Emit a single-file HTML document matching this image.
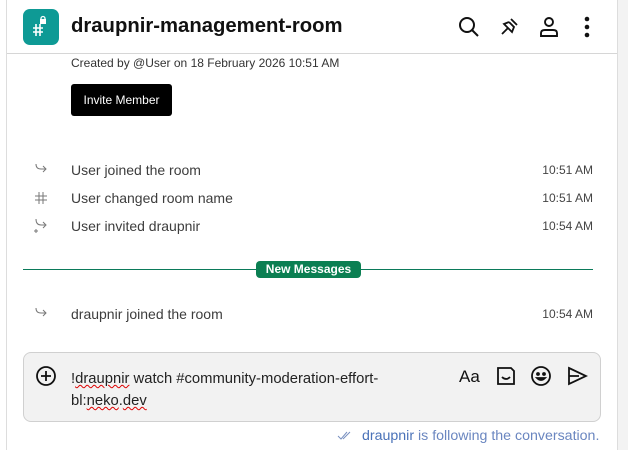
<!DOCTYPE html>
<html><head><style>
body{margin:0;width:628px;height:450px;overflow:hidden;background:#fff;font-family:"Liberation Sans",sans-serif;position:relative;color:#333}
.a{position:absolute}
.lb{left:0;top:0;width:6px;height:450px;border-right:1px solid #ddd;background:#fff}
.rb{left:617px;top:0;width:11px;height:450px;background:#f3f3f3;border-left:1px solid #ddd}
.hdr{left:7px;top:0;width:610px;height:53px;border-bottom:1px solid #d6d6d6;background:#fff}
.ev{font-size:14px;color:#3d3d3d}
.t{font-size:12px;color:#444;right:35px}
svg{position:absolute}
</style></head><body>
<div class="a lb"></div><div class="a rb"></div>
<div class="a hdr"></div>
<div class="a" style="left:23px;top:9px;width:36px;height:36px;border-radius:7px;background:#0e9a95"></div>
<svg style="left:23px;top:9px" width="36" height="36" viewBox="0 0 36 36" fill="none" stroke="#fff" stroke-width="1.6"><path d="M13 15v12M17 15v12M10 19h10M10 23h10"/><rect x="17" y="10" width="6" height="5" fill="#fff" stroke="none"/><path d="M18 10.5v-1a2 2 0 0 1 4 0v1" stroke-width="1.3"/></svg>
<div class="a" style="left:71px;top:15px;font-size:20.3px;font-weight:bold;color:#111">draupnir-management-room</div>
<svg style="left:457px;top:15px" width="24" height="24" viewBox="0 0 24 24" fill="none" stroke="#111" stroke-width="2"><circle cx="10" cy="10" r="7"/><path d="M15 15l6 6"/></svg>
<svg style="left:498px;top:16px" width="22" height="22" viewBox="0 0 22 22" fill="none" stroke="#111" stroke-width="1.8"><path d="M13 3l6 6M11 6l5 5-2 5-8-8 5-2M10 12l-6 6"/></svg>
<svg style="left:538px;top:15px" width="22" height="24" viewBox="0 0 22 24" fill="none" stroke="#111" stroke-width="1.9"><circle cx="11" cy="7" r="4"/><path d="M3 21v-3q0-3 4-3h8q4 0 4 3v3z"/></svg>
<svg style="left:583px;top:15px" width="8" height="24" viewBox="0 0 8 24" fill="#111"><circle cx="4" cy="4" r="2.3"/><circle cx="4" cy="12" r="2.3"/><circle cx="4" cy="20" r="2.3"/></svg>
<div class="a" style="left:71px;top:56px;font-size:12px;color:#333">Created by @User on 18 February 2026 10:51 AM</div>
<div class="a" style="left:71px;top:84px;width:101px;height:32px;background:#000;border-radius:3px;color:#fff;font-size:12px;line-height:32px;text-align:center">Invite Member</div>

<svg style="left:34px;top:163px" width="14" height="12" viewBox="0 0 14 12" fill="none" stroke="#777" stroke-width="1"><path d="M2 1q0 5 5 5h5M9 3l3 3-3 3"/></svg>
<div class="a ev" style="left:71px;top:162px">User joined the room</div><div class="a t" style="top:163px">10:51 AM</div>
<svg style="left:34px;top:191px" width="14" height="14" viewBox="0 0 14 14" fill="none" stroke="#777" stroke-width="1"><path d="M5 1v12M9 1v12M1 5h12M1 9h12"/></svg>
<div class="a ev" style="left:71px;top:190px">User changed room name</div><div class="a t" style="top:191px">10:51 AM</div>
<svg style="left:33px;top:218px" width="15" height="16" viewBox="0 0 15 16" fill="none" stroke="#777" stroke-width="1"><path d="M3 1q0 6 5 6h4M10 4l3 3-3 3M3 11v4M1 13h4"/></svg>
<div class="a ev" style="left:71px;top:218px">User invited draupnir</div><div class="a t" style="top:219px">10:54 AM</div>

<div class="a" style="left:23px;top:269px;width:570px;height:1px;background:#0b7a5a"></div>
<div class="a" style="left:256px;top:261px;width:105px;height:17px;background:#0b7f52;border-radius:4px;color:#fff;font-size:12px;font-weight:bold;line-height:17px;text-align:center">New Messages</div>

<svg style="left:34px;top:307px" width="14" height="12" viewBox="0 0 14 12" fill="none" stroke="#777" stroke-width="1"><path d="M2 1q0 5 5 5h5M9 3l3 3-3 3"/></svg>
<div class="a ev" style="left:71px;top:306px">draupnir joined the room</div><div class="a t" style="top:307px">10:54 AM</div>

<div class="a" style="left:23px;top:352px;width:576px;height:68px;background:#f2f2f2;border:1px solid #d0d0d0;border-radius:8px"></div>
<svg style="left:35px;top:365px" width="22" height="22" viewBox="0 0 22 22" fill="none" stroke="#111" stroke-width="1.8"><circle cx="11" cy="11" r="9"/><path d="M11 6v10M6 11h10"/></svg>
<div class="a" style="left:71px;top:368px;font-size:14.8px;color:#222;line-height:22px">!<span style="text-decoration:underline wavy #d00;text-decoration-thickness:1px">draupnir</span> watch #community-moderation-effort-<br>bl:<span style="text-decoration:underline wavy #d00;text-decoration-thickness:1px">neko</span>.<span style="text-decoration:underline wavy #d00;text-decoration-thickness:1px">dev</span></div>
<div class="a" style="left:459px;top:367px;font-size:17px;color:#111">Aa</div>
<svg style="left:495px;top:365px" width="22" height="22" viewBox="0 0 22 22" fill="none" stroke="#111" stroke-width="1.8"><path d="M3 3h13l3 3v13H3z"/><path d="M7 12q4 4 8 0"/></svg>
<svg style="left:530px;top:365px" width="22" height="22" viewBox="0 0 22 22" fill="none" stroke="#111" stroke-width="1.8"><circle cx="11" cy="11" r="9"/><circle cx="8" cy="9" r="1" fill="#111"/><circle cx="14" cy="9" r="1" fill="#111"/><path d="M7 13q4 4 8 0z" fill="#111"/></svg>
<svg style="left:566px;top:365px" width="22" height="22" viewBox="0 0 22 22" fill="none" stroke="#111" stroke-width="1.8"><path d="M3 3l17 8-17 8zM3 11h10"/></svg>

<svg style="left:337px;top:431px" width="16" height="10" viewBox="0 0 16 10" fill="none" stroke="#7890c0" stroke-width="1"><path d="M1 5l3 3 6-7M6 8l7-7"/></svg>
<div class="a" style="left:362px;top:428px;font-size:14.2px;color:#4a72b8">draupnir <span style="color:#6a86c0">is following the conversation.</span></div>
</body></html>
